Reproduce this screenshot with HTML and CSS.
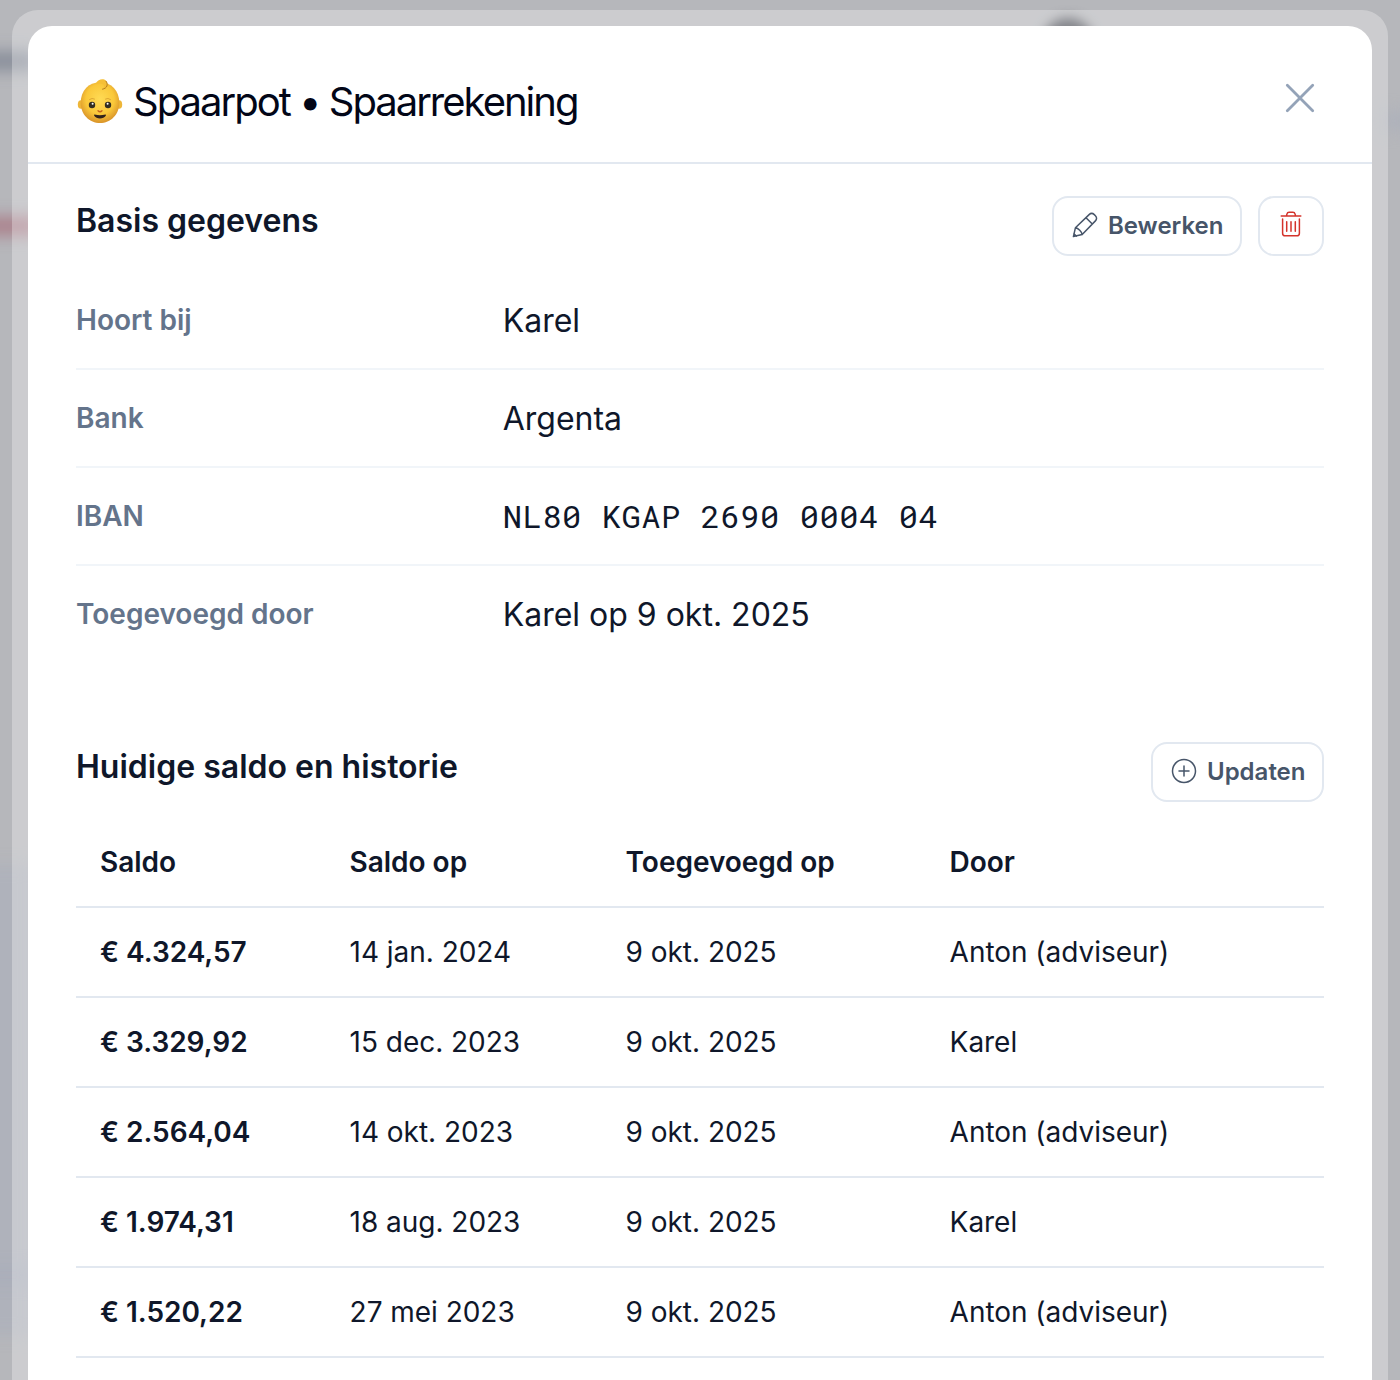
FILE: index.html
```html
<!DOCTYPE html>
<html lang="nl">
	<head>
		<meta charset="utf-8">
		<title>Spaarpot • Spaarrekening</title>
		<link rel="stylesheet" href="styles.css">
	</head>

	<body>
		<div class="backdrop">
			<span class="blob slate"></span>
			<span class="blob red"></span>
			<span class="blob blue"></span>
			<span class="blob blue-low"></span>
			<span class="blob avatar"></span>
			<span class="blob side"></span>
		</div>

		<div class="ring">
			<div class="modal">
				<header class="modal-header">
					<h1>
						<svg class="baby" viewBox="0 0 46 46">
							<defs>
								<radialGradient id="face" cx="50%" cy="42%" r="56%">
									<stop offset="0" stop-color="#ffdb55"/>
									<stop offset="0.65" stop-color="#fac83a"/>
									<stop offset="1" stop-color="#dc982b"/>
								</radialGradient>
							</defs>
							<ellipse cx="4" cy="26.5" rx="3.2" ry="4.3" fill="#eeb638"/>
							<ellipse cx="42" cy="26.5" rx="3.2" ry="4.3" fill="#eeb638"/>
							<path d="M23 4.2c11.500 0 19.300 8.600 19.300 20.500S33.500 45 23 45 3.700 36.600 3.700 24.700 11.500 4.200 23 4.200z" fill="url(#face)"/>
							<path d="M19 5c2-3.500 7-5.300 10-2.300 3 3 1.500 8-3.500 8.500 2-2 2-4.500 0-5.300-2-.8-4.500.2-6.500-.9z" fill="#f5bf36"/>
							<path d="M25.500 11.200c4.800-.7 6-5 3.500-8" fill="none" stroke="#ae761d" stroke-width="0.9" stroke-linecap="round"/>
							<path d="M12.500 21.500q2.500-2 5-.5M28.500 21q2.500-1.500 5 .5" fill="none" stroke="#d49b2d" stroke-width="0.8" stroke-linecap="round"/>
							<ellipse cx="15" cy="27" rx="3.200" ry="3.300" fill="#332e20"/>
							<ellipse cx="31" cy="27" rx="3.200" ry="3.300" fill="#332e20"/>
							<circle cx="15.600" cy="25.800" r="1" fill="#fff"/>
							<circle cx="30.600" cy="25.800" r="1" fill="#fff"/>
							<path d="M21 32.800q2 2 4 0" fill="none" stroke="#c5631d" stroke-width="1.300" stroke-linecap="round"/>
							<path d="M17.600 36.600q5.400 1.400 10.800 0c.8 0 .6.900.2 1.500-1.200 1.700-3 2.400-5.600 2.400s-4.500-.7-5.600-2.400c-.4-.6-.5-1.500.2-1.500z" fill="#31221b"/>
						</svg>
						<span>Spaarpot • Spaarrekening</span>
					</h1>
					<button class="close">
						<svg viewBox="0 0 32 32"><path d="M3.300 3.300l25.400 25.400M28.700 3.300L3.300 28.700"/></svg>
					</button>
				</header>

				<section class="details">
					<div class="section-head">
						<h2>Basis gegevens</h2>
						<div class="actions">
							<button class="btn">
								<svg viewBox="0 0 26 26"><path d="M1.400 24.600L3.400 15.800 17.100 2.600c1.600-1.500 3.700-1.400 5.200 0l1.100 1.100c1.500 1.500 1.600 3.600 0 5.200L10.200 22.600zM14 5.700l6.300 6.300M3.400 15.800c2.800.3 6.500 3.900 6.800 6.800M1.900 21.700l2.400 2.400"/></svg>
								Bewerken
							</button>
							<button class="btn danger">
								<svg viewBox="0 0 26 26"><path d="M3.200 5.100h19.600M8.400 5.100l.5-2c.3-1.200 1-1.900 2.200-1.900h3.800c1.200 0 1.900.7 2.200 1.900l.5 2M4.600 8v14.200c0 1.900.8 2.600 2.600 2.600h11.600c1.800 0 2.600-.7 2.600-2.600V8M8.700 10.800v9.500M13 10.800v9.500M17.300 10.800v9.500"/></svg>
							</button>
						</div>
					</div>
					<dl>
						<div class="row"><dt>Hoort bij</dt><dd>Karel</dd></div>
						<div class="row"><dt>Bank</dt><dd>Argenta</dd></div>
						<div class="row"><dt>IBAN</dt><dd class="mono">NL80 KGAP 2690 0004 04</dd></div>
						<div class="row"><dt>Toegevoegd door</dt><dd>Karel op 9 okt. 2025</dd></div>
					</dl>
				</section>

				<section class="history">
					<div class="section-head">
						<h2>Huidige saldo en historie</h2>
						<div class="actions">
							<button class="btn">
								<svg viewBox="0 0 26 26"><circle cx="13" cy="13" r="11.500"/><path d="M13 8v10M8 13h10"/></svg>
								Updaten
							</button>
						</div>
					</div>
					<table>
						<thead>
							<tr><th class="c1">Saldo</th><th class="c2">Saldo op</th><th class="c3">Toegevoegd op</th><th>Door</th></tr>
						</thead>
						<tbody>
							<tr><td class="amount">€ 4.324,57</td><td>14 jan. 2024</td><td>9 okt. 2025</td><td>Anton (adviseur)</td></tr>
							<tr><td class="amount">€ 3.329,92</td><td>15 dec. 2023</td><td>9 okt. 2025</td><td>Karel</td></tr>
							<tr><td class="amount">€ 2.564,04</td><td>14 okt. 2023</td><td>9 okt. 2025</td><td>Anton (adviseur)</td></tr>
							<tr><td class="amount">€ 1.974,31</td><td>18 aug. 2023</td><td>9 okt. 2025</td><td>Karel</td></tr>
							<tr><td class="amount">€ 1.520,22</td><td>27 mei 2023</td><td>9 okt. 2025</td><td>Anton (adviseur)</td></tr>
						</tbody>
					</table>
				</section>
			</div>
		</div>
	</body>
</html>
```
FILE: styles.css
```css
* {
	box-sizing: border-box;
}

html, body {
	height: 100%;
	margin: 0;
	overflow: hidden;
}

body {
	background: #b6b7bb;
	color: #0f172a;
	font-family: Inter, "Liberation Sans", sans-serif;
	padding: 10px 12px 0;
}

h1, h2, dl, dd {
	margin: 0;
}

/* blurred page behind the modal */
.backdrop {
	position: absolute;
	inset: 0;
	overflow: hidden;
}

.blob {
	position: absolute;
	filter: blur(8px);
}

.blob.slate {
	left: -30px;
	top: 52px;
	width: 66px;
	height: 18px;
	background: #858b98;
}

.blob.red {
	left: -30px;
	top: 217px;
	width: 68px;
	height: 18px;
	background: #aa7d89;
}

.blob.blue {
	left: -30px;
	top: 865px;
	width: 65px;
	height: 470px;
	background: #afb2bb;
}

.blob.blue-low {
	left: -30px;
	top: 1268px;
	width: 65px;
	height: 14px;
	background: #a9adba;
}

.blob.avatar {
	left: 1042px;
	top: 18px;
	width: 52px;
	height: 52px;
	border-radius: 50%;
	background: #4e5058;
	filter: blur(6px);
}

.blob.side {
	left: 1384px;
	top: 112px;
	width: 40px;
	height: 18px;
	background: #adb1bb;
}

.ring {
	position: relative;
	height: 1400px;
	padding: 16px 16px 0;
	border-radius: 26px;
	background: rgba(255, 255, 255, 0.3);
}

.modal {
	height: 100%;
	border-radius: 24px;
	background: #fff;
}

.modal-header {
	display: flex;
	justify-content: space-between;
	height: 138px;
	padding: 48px 48px 0;
	border-bottom: 2px solid #e2e8f0;
}

h1 {
	display: flex;
	align-items: center;
	gap: 10px;
	height: 54px;
	padding-left: 1px;
	color: #020617;
	font-size: 40px;
	font-weight: 400;
	letter-spacing: -2px;
}

.baby {
	width: 46px;
	height: 46px;
}

button {
	border: none;
	background: none;
	font-family: inherit;
}

.close {
	width: 48px;
	height: 48px;
	padding: 8px;
}

.close svg {
	display: block;
	fill: none;
	stroke: #94a3b8;
	stroke-width: 2.800;
	stroke-linecap: round;
}

.details, .history {
	padding: 32px 48px 0;
}

.section-head {
	display: flex;
	justify-content: space-between;
	height: 60px;
}

h2 {
	font-size: 32px;
	font-weight: 600;
	line-height: 50px;
}

.actions {
	display: flex;
	gap: 16px;
}

.btn {
	display: flex;
	align-items: center;
	gap: 10px;
	height: 60px;
	padding: 0 16.5px 2px 18px;
	border: 2px solid #e2e8f0;
	border-radius: 16px;
	color: #475569;
	font-size: 24px;
	font-weight: 600;
}

.btn.danger {
	padding: 0 18px 4px;
}

.btn svg {
	width: 26px;
	height: 26px;
	fill: none;
	stroke: #475569;
	stroke-width: 1.500;
	stroke-linecap: round;
	stroke-linejoin: round;
}

.btn.danger svg {
	stroke: #d4332b;
}

dl {
	padding-top: 16px;
}

.row {
	display: grid;
	grid-template-columns: repeat(3, 1fr);
	gap: 32px;
	height: 98px;
	line-height: 96px;
	border-bottom: 2px solid #f1f5f9;
}

.row:last-child {
	border-bottom: none;
}

dt {
	color: #64748b;
	font-size: 28px;
	font-weight: 600;
}

dd {
	grid-column: span 2;
	font-size: 32px;
	line-height: 98px;
}

dd.mono {
	font-family: "Roboto Mono", "Liberation Mono", monospace;
	letter-spacing: 0.600px;
	line-height: 96px;
}

.history {
	padding-top: 78px;
}

table {
	width: 100%;
	margin-top: 16px;
	border-collapse: separate;
	border-spacing: 0;
	table-layout: fixed;
	font-size: 28px;
	letter-spacing: -0.030px;
}

th, td {
	height: 90px;
	padding: 0 24px;
	border-bottom: 2px solid #e2e8f0;
	text-align: left;
	white-space: nowrap;
}

th {
	font-weight: 600;
}

.c1 {
	width: 249.600px;
}

.c2 {
	width: 276px;
}

.c3 {
	width: 324px;
}

.amount {
	font-weight: 600;
}
```
